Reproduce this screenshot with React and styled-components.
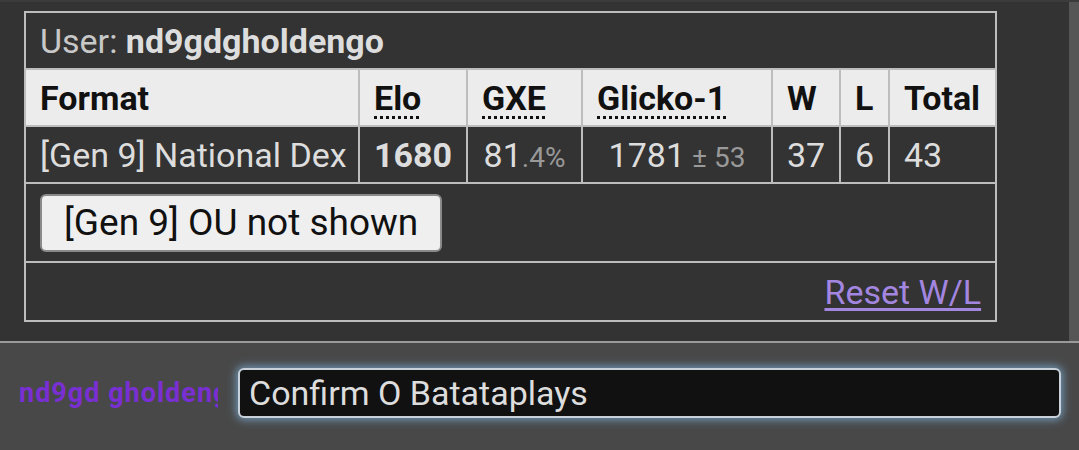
import React from 'react';
import styled, { createGlobalStyle } from 'styled-components';

const GlobalStyle = createGlobalStyle`
  html, body {
    margin: 0;
    padding: 0;
    background: #484848;
    font-family: Roboto, "Noto Sans", sans-serif;
  }
`;

const Page = styled.div`
  width: 1079px;
  height: 450px;
  display: flex;
  flex-direction: column;
  overflow: hidden;
`;

const Panel = styled.div`
  height: 343px;
  display: flex;
  background: #333;
  border-top: 2px solid #3b3b3b;
  border-bottom: 2px solid #9a9a9a;
  box-sizing: border-box;
`;

const PanelBody = styled.div`
  flex: 1;
  padding: 9px 0 0 24px;
`;

const ScrollTrack = styled.div`
  width: 10px;
  background: #565656;
`;

const Table = styled.table`
  width: 971px;
  table-layout: fixed;
  border-collapse: collapse;
  border: 2px solid #bdbdbd;
  font-size: 34px;
  color: #ddd;
`;

const Cell = styled.td`
  border: 2px solid #bdbdbd;
  padding: 0 14px;
  height: 55px;
  text-align: ${props => props.center ? 'center' : 'left'};
  white-space: nowrap;
  overflow: hidden;
`;

const UserCell = styled(Cell)`
  color: #c8c8c8;
`;

const UserName = styled.strong`
  color: #ddd;
`;

const HeadCell = styled.th`
  border: 2px solid #bdbdbd;
  padding: 0 14px;
  height: 55px;
  background: #ececec;
  color: #111;
  text-align: left;
  font-weight: 700;
  white-space: nowrap;
`;

const Abbr = styled.abbr`
  text-decoration: underline dotted;
  text-decoration-thickness: 3px;
  text-underline-offset: 6px;
`;

const Small = styled.small`
  font-size: 28px;
  color: #999;
`;

const ButtonCell = styled(Cell)`
  height: 77px;
`;

const Button = styled.button`
  font-family: Roboto, "Noto Sans", sans-serif;
  font-size: 37px;
  color: #111;
  background: #efefef;
  border: 2px solid #8a8a8a;
  border-radius: 6px;
  height: 58px;
  padding: 0 22px;
  margin-left: 0;
`;

const LinkCell = styled(Cell)`
  height: 57px;
  text-align: right;
`;

const Link = styled.a`
  color: #a386e0;
  text-decoration: underline;
  text-decoration-thickness: 3px;
  text-underline-offset: 4px;
`;

const Footer = styled.div`
  flex: 1;
  display: flex;
  align-items: flex-start;
  padding: 25px 18px 0 19px;
  gap: 20px;
`;

const Name = styled.div`
  width: 199px;
  flex-shrink: 0;
  overflow: hidden;
  white-space: nowrap;
  font-size: 27px;
  font-weight: 700;
  letter-spacing: 1px;
  color: #7a2fd3;
  line-height: 50px;
  height: 50px;
`;

const Input = styled.div`
  flex: 1;
  height: 50px;
  box-sizing: border-box;
  background: #111;
  border: 2px solid #c9d2da;
  border-radius: 6px;
  box-shadow: 0 0 8px 2px rgba(125, 175, 215, 0.75);
  color: #ddd;
  font-size: 34px;
  line-height: 46px;
  padding-left: 9px;
`;

const cols = [334, 108, 115, 190, 68, 49, 107];

export default function App() {
  return (
    <Page>
      <GlobalStyle />
      <Panel>
        <PanelBody>
          <Table>
            <colgroup>
              {cols.map((w, i) => <col key={i} style={{ width: w }} />)}
            </colgroup>
            <tbody>
              <tr>
                <UserCell colSpan={7}>User: <UserName>nd9gdgholdengo</UserName></UserCell>
              </tr>
              <tr>
                <HeadCell>Format</HeadCell>
                <HeadCell><Abbr>Elo</Abbr></HeadCell>
                <HeadCell><Abbr>GXE</Abbr></HeadCell>
                <HeadCell><Abbr>Glicko-1</Abbr></HeadCell>
                <HeadCell>W</HeadCell>
                <HeadCell>L</HeadCell>
                <HeadCell>Total</HeadCell>
              </tr>
              <tr>
                <Cell>[Gen 9] National Dex</Cell>
                <Cell center><strong>1680</strong></Cell>
                <Cell center>81<Small>.4%</Small></Cell>
                <Cell center>1781<Small> ± 53</Small></Cell>
                <Cell center>37</Cell>
                <Cell center>6</Cell>
                <Cell>43</Cell>
              </tr>
              <tr>
                <ButtonCell colSpan={7}>
                  <Button>[Gen 9] OU not shown</Button>
                </ButtonCell>
              </tr>
              <tr>
                <LinkCell colSpan={7}><Link href="#">Reset W/L</Link></LinkCell>
              </tr>
            </tbody>
          </Table>
        </PanelBody>
        <ScrollTrack />
      </Panel>
      <Footer>
        <Name>nd9gd gholdengo</Name>
        <Input>Confirm O Batataplays</Input>
      </Footer>
    </Page>
  );
}
